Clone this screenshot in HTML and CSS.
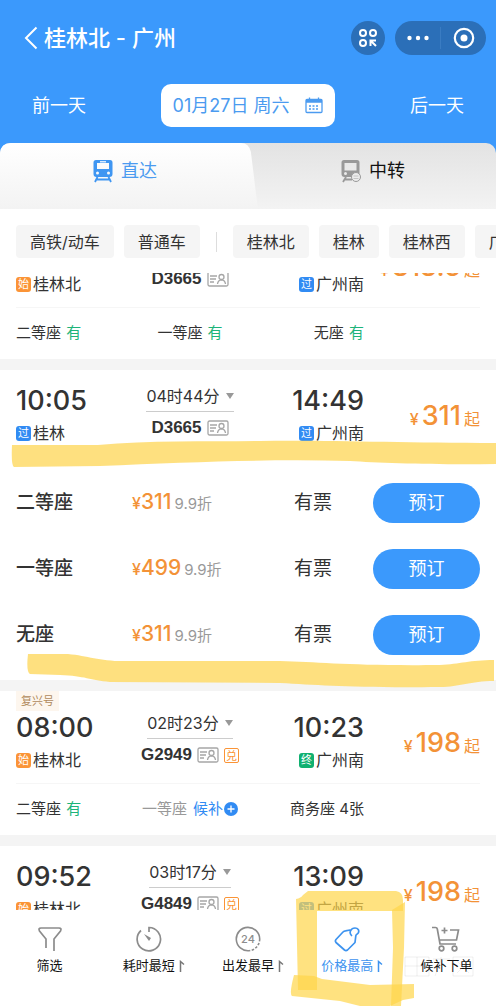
FILE: index.html
```html
<!DOCTYPE html>
<html lang="zh-CN">
<head>
<meta charset="utf-8">
<meta name="viewport" content="width=device-width, initial-scale=1">
<title>桂林北 - 广州</title>
<link rel="stylesheet" href="styles.css">
</head>
<body>
<svg class="defs" width="0" height="0" aria-hidden="true">
  <symbol id="idcard" viewBox="0 0 22 16">
    <g fill="none" stroke="#a6a6a6" stroke-width="1.3">
      <rect x="1" y="1" width="20" height="14" rx="1.5"/>
      <path d="M3 5h7M3 8h6M3 11h4M10.500 13c.3-2.500 1.500-4 4-4.200 2.500.2 3.700 1.700 4 4.200"/>
      <circle cx="14.500" cy="6" r="2.500"/>
    </g>
  </symbol>
  <symbol id="flag" viewBox="0 0 6 12">
    <path d="M1.500 12V1.500L5 4.500" fill="none" stroke="currentColor" stroke-width="1.500"/>
  </symbol>
</svg>
<div class="app">
  <header class="header">
    <div class="nav">
      <button class="back" aria-label="返回"><svg width="14" height="24" viewBox="0 0 14 24"><path d="M12.500 1.500 2 12l10.500 10.500" fill="none" stroke="#fff" stroke-width="2"/></svg></button>
      <h1 class="title">桂林北 - 广州</h1>
      <button class="scan" aria-label="小程序"><svg width="20" height="20" viewBox="0 0 20 20" fill="none" stroke="#fff" stroke-width="2"><circle cx="5" cy="5" r="3"/><circle cx="15" cy="5" r="3"/><circle cx="5" cy="15" r="3"/><path d="M18 12.500h-5.500V18M13 13l5 5"/></svg></button>
      <div class="capsule">
        <button aria-label="更多"><svg width="24" height="22" viewBox="0 0 24 22" fill="#fff"><circle cx="3.500" cy="11" r="2.200"/><circle cx="12" cy="11" r="2.200"/><circle cx="20.500" cy="11" r="2.200"/></svg></button>
        <button aria-label="关闭"><svg width="22" height="22" viewBox="0 0 22 22"><circle cx="11" cy="11" r="9.200" fill="none" stroke="#fff" stroke-width="2.200"/><circle cx="11" cy="11" r="3.500" fill="#fff"/></svg></button>
      </div>
    </div>
    <div class="days">
      <button class="day">前一天</button>
      <button class="date">01月27日 周六
        <svg width="18" height="17" viewBox="0 0 18 17"><g fill="none" stroke="#4b9bf0" stroke-width="1.300"><rect x="1" y="2.500" width="16" height="13" rx="1"/><path d="M1 5h16M4.500.5v3M13.500.5v3"/><path d="M4 9h10M4 12h10" stroke-dasharray="2 1.500"/></g><path d="M1 2.500h16V5H1z" fill="#4b9bf0"/></svg>
      </button>
      <button class="day">后一天</button>
    </div>
  </header>

  <div class="tabs" role="tablist">
    <svg class="tab-shape" viewBox="0 0 258 66" preserveAspectRatio="none" aria-hidden="true">
      <defs><linearGradient id="tabfade" x1="0" y1="0" x2="0" y2="1"><stop offset="0" stop-color="#fff"/><stop offset="1" stop-color="#f3f3f3"/></linearGradient></defs>
      <path d="M0 10Q1 0 11 0H241Q249 0 251 9L258 66H0Z" fill="url(#tabfade)"/>
    </svg>
    <button class="tab active" role="tab" aria-selected="true">
      <svg width="20" height="24" viewBox="0 0 20 24"><path fill="#3f96f2" fill-rule="evenodd" d="M3 1h14a2.500 2.500 0 0 1 2.500 2.500V15a3 3 0 0 1-3 3h-13a3 3 0 0 1-3-3V3.500A2.500 2.500 0 0 1 3 1ZM4 4v6h12V4ZM4.500 12.500a1.500 1.500 0 1 0 0 3 1.500 1.500 0 0 0 0-3ZM15.500 12.500a1.500 1.500 0 1 0 0 3 1.500 1.500 0 0 0 0-3Z"/><path d="M7 2.800h6" stroke="#fff" stroke-width="1.200"/><path d="M4.500 18 2 23M15.500 18l2.500 5M4 20.500h12" stroke="#3f96f2" stroke-width="1.800"/></svg>
      直达
    </button>
    <button class="tab" role="tab" aria-selected="false">
      <svg width="20" height="24" viewBox="0 0 20 24"><path fill="#999" fill-rule="evenodd" d="M3 1h13a2.500 2.500 0 0 1 2.500 2.500V15a3 3 0 0 1-3 3H3.500a3 3 0 0 1-3-3V3.500A2.500 2.500 0 0 1 3 1ZM3.500 4v7.500h12V4ZM4.500 13a1.500 1.500 0 1 0 0 3 1.500 1.500 0 0 0 0-3Z"/><path d="M5 18l-3 5M3 20.500h8" stroke="#999" stroke-width="1.800"/><circle cx="15" cy="18" r="4.500" fill="#ececec" stroke="#999"/><path d="M12.500 17h5M12.500 19.500h5" stroke="#c4c4c4"/></svg>
      中转
    </button>
  </div>

  <nav class="filters">
    <button class="chip">高铁/动车</button>
    <button class="chip">普通车</button>
    <span class="divider"></span>
    <button class="chip">桂林北</button>
    <button class="chip">桂林</button>
    <button class="chip">桂林西</button>
    <button class="chip">广州</button>
  </nav>

  <main class="list">
    <div class="scroll">
      <article class="card">
        <div class="trip">
          <div class="stop"><span class="time">09:22</span><span class="station"><i class="mark start">始</i>桂林北</span></div>
          <div class="mid"><button class="duration">03时53分 <i class="caret"></i></button><span class="train">D3665 <svg width="22" height="16"><use href="#idcard"/></svg></span></div>
          <div class="stop end"><span class="time">13:15</span><span class="station"><i class="mark pass">过</i>广州南</span></div>
          <div class="price"><small>¥</small><b>313.5</b><span>起</span></div>
        </div>
        <div class="seats"><span>二等座 <em>有</em></span><span>一等座 <em>有</em></span><span>无座 <em>有</em></span></div>
      </article>

      <article class="card open">
        <div class="trip">
          <div class="stop"><span class="time">10:05</span><span class="station"><i class="mark pass">过</i>桂林</span></div>
          <div class="mid"><button class="duration">04时44分 <i class="caret"></i></button><span class="train">D3665 <svg width="22" height="16"><use href="#idcard"/></svg></span></div>
          <div class="stop end"><span class="time">14:49</span><span class="station"><i class="mark pass">过</i>广州南</span></div>
          <div class="price"><small>¥</small><b>311</b><span>起</span></div>
        </div>
        <div class="fares">
          <div class="fare"><strong>二等座</strong><span class="cost">¥<b>311</b><small>9.9折</small></span><span class="left">有票</span><button class="book">预订</button></div>
          <div class="fare"><strong>一等座</strong><span class="cost">¥<b>499</b><small>9.9折</small></span><span class="left">有票</span><button class="book">预订</button></div>
          <div class="fare"><strong>无座</strong><span class="cost">¥<b>311</b><small>9.9折</small></span><span class="left">有票</span><button class="book">预订</button></div>
        </div>
        <svg class="stroke" viewBox="0 0 496 320" preserveAspectRatio="none" aria-hidden="true">
          <path d="M12 75 98 75C150 70 210 72 260 71 330 70 400 73 496 73V94C440 95 380 93 350 91 270 89 190 92 100 96L14 97Q11 96 12 75Z"/>
          <path d="M28 284H68C90 286 100 292 130 291H280C320 292 350 296 440 295 460 294 470 290 494 290V311C470 311 460 317 440 317 350 318 320 315 280 313L110 312C90 310 85 306 60 305L30 304Q26 302 28 284Z"/>
        </svg>
      </article>

      <article class="card">
        <span class="tag">复兴号</span>
        <div class="trip tagged">
          <div class="stop"><span class="time">08:00</span><span class="station"><i class="mark start">始</i>桂林北</span></div>
          <div class="mid"><button class="duration">02时23分 <i class="caret"></i></button><span class="train">G2949 <svg width="22" height="16"><use href="#idcard"/></svg><i class="redeem">兑</i></span></div>
          <div class="stop end"><span class="time">10:23</span><span class="station"><i class="mark final">终</i>广州南</span></div>
          <div class="price"><small>¥</small><b>198</b><span>起</span></div>
        </div>
        <div class="seats"><span>二等座 <em>有</em></span><span class="wait">一等座 <a href="#">候补<svg width="14" height="14" viewBox="0 0 14 14"><circle cx="7" cy="7" r="7" fill="#318bf3"/><path d="M7 3.500v7M3.500 7h7" stroke="#fff" stroke-width="1.300"/></svg></a></span><span>商务座 4张</span></div>
      </article>

      <article class="card">
        <div class="trip">
          <div class="stop"><span class="time">09:52</span><span class="station"><i class="mark start">始</i>桂林北</span></div>
          <div class="mid"><button class="duration">03时17分 <i class="caret"></i></button><span class="train">G4849 <svg width="22" height="16"><use href="#idcard"/></svg><i class="redeem">兑</i></span></div>
          <div class="stop end"><span class="time">13:09</span><span class="station"><i class="mark pass">过</i>广州南</span></div>
          <div class="price"><small>¥</small><b>198</b><span>起</span></div>
        </div>
      </article>
    </div>
  </main>

  <footer class="sortbar">
    <button class="sort"><svg width="26" height="26" viewBox="0 0 26 26" fill="none" stroke="#8c8c8c" stroke-width="1.700"><path d="M9 22V13L2.500 5Q1 2 4 2H22Q25 2 23.500 5L17 13V25"/></svg><span>筛选</span></button>
    <button class="sort"><svg width="26" height="26" viewBox="0 0 26 26" fill="none" stroke="#8c8c8c" stroke-width="1.700"><path d="M13 6V1.500A11.700 11.700 0 1 1 5 4.500"/><path d="m8 8 7 4-2 3Z" fill="#8c8c8c" stroke="none"/></svg><span>耗时最短<svg class="dir" width="6" height="12"><use href="#flag"/></svg></span></button>
    <button class="sort"><svg width="26" height="26" viewBox="0 0 26 26" fill="none" stroke="#8c8c8c" stroke-width="1.600"><path d="M14 24.700A11.700 11.700 0 1 1 24.700 13"/><path d="M24.700 13A11.700 11.700 0 0 1 14 24.700" stroke-dasharray="2.500 1.500"/><text x="13" y="17" text-anchor="middle" class="num">24</text></svg><span>出发最早<svg class="dir" width="6" height="12"><use href="#flag"/></svg></span></button>
    <button class="sort on"><svg width="26" height="26" viewBox="0 0 26 26" fill="none" stroke="#3d93ef" stroke-width="1.700" stroke-linejoin="round" stroke-linecap="round"><path d="M17.500 9.500C14.500 6.500 17 2 21 2c3 0 4.500 2.500 3.300 4.800-.7 1.400-2.300 1.500-2.500 3L21 16.500 13.500 24Q12 25.200 10.500 24L2 16.500Q.8 15 2 13.500L9 6Q10 5 11.500 4.800L16 4"/></svg><span>价格最高<svg class="dir" width="6" height="12"><use href="#flag"/></svg></span></button>
    <button class="sort"><svg width="28" height="26" viewBox="0 0 28 26" fill="none" stroke="#8c8c8c" stroke-width="1.700"><path d="M0 1.500H3.500Q5 1.500 5.300 3L8 18H24M18 4H26.500L24.500 14H8M9.500 4.500h6M12.500 1.500v6"/><circle cx="9.500" cy="22.500" r="2.300"/><circle cx="22.500" cy="22.500" r="2.300"/></svg><span>候补下单</span></button>
    <svg class="frame" viewBox="0 0 128 118" aria-hidden="true">
      <path d="M18 3H106Q113 4 113 12V23H27V102H8L6 11Q11 10 13 7Z"/>
      <path d="M4 87 24 88 32 91 80 97 124 96V110L113 112 100 118H70L50 113 2 108Q-1 106 4 87Z"/>
      <path d="M102 22 115 14 114 60 111 118H101L103 60Z"/>
    </svg>
    <svg class="watermark" viewBox="0 0 72 22" aria-hidden="true"><path d="M1 1h24v19H1zM1 10h24M13 1v19M29 3h17M37 1v3L31 20M49 1h20v19H49zM53 5l12 12M65 5 53 17"/></svg>
  </footer>
</div>
</body>
</html>
```
FILE: styles.css
```css
* { box-sizing: border-box; }
body {
  margin: 0;
  font-family: Inter, "Noto Sans CJK SC", sans-serif;
  font-size: 16px;
  line-height: 24px;
  color: #333;
  background: #fff;
}
button {
  margin: 0;
  padding: 0;
  border: 0;
  background: none;
  color: inherit;
  font: inherit;
  white-space: nowrap;
}
i, em { font-style: normal; }
svg { display: block; flex: none; }
.defs { position: absolute; }
.app {
  display: flex;
  flex-direction: column;
  height: 100vh;
  overflow: hidden;
}

/* header */
.header { padding-bottom: 26px; margin-bottom: -10px; background: #3b99fc; color: #fff; flex: none; }
.nav { display: flex; align-items: center; height: 76px; padding: 0 10px 0 24px; }
.title { flex: 1; margin: 0 0 0 6px; font-size: 22px; line-height: 32px; font-weight: 500; }
.scan {
  display: grid;
  place-items: center;
  width: 34px;
  height: 34px;
  margin-right: 10px;
  border-radius: 50%;
  background: #2b6fb8;
}
.capsule { display: flex; align-items: center; width: 91px; height: 34px; border-radius: 17px; background: #2b6fb8; }
.capsule button { flex: 1; display: grid; place-items: center; height: 22px; }
.capsule button + button { border-left: 1px solid #3a7cc2; }
.days { display: flex; align-items: center; justify-content: space-between; margin-top: 8px; padding: 0 32px; font-size: 18px; }
.date {
  display: flex;
  align-items: center;
  gap: 16px;
  height: 43px;
  padding: 0 12px;
  border-radius: 10px;
  background: #fff;
  color: #4b9bf0;
}

/* tabs */
.tabs {
  position: relative;
  display: flex;
  flex: none;
  height: 66px;
  border-radius: 10px 10px 0 0;
  background: linear-gradient(#e3e3e3, #f3f3f3);
}
.tab-shape { position: absolute; left: 0; top: 0; width: 52%; height: 100%; }
.tab {
  position: relative;
  flex: 1;
  display: flex;
  align-items: center;
  justify-content: center;
  gap: 8px;
  padding: 0 0 10px 2px;
  font-size: 18px;
  color: #111;
}
.tab.active { color: #4b9bf0; }

/* filters */
.filters { display: flex; flex: none; gap: 10px; padding: 16px 0 15px 16px; overflow: hidden; }
.chip { flex: none; height: 33px; padding: 0 14px; border-radius: 4px; background: #f5f5f5; }
.divider { flex: none; width: 1px; height: 20px; margin: 7px 6px 0; background: #ddd; }

/* train list */
.list { flex: 1; min-height: 0; overflow: hidden; background: #f4f4f4; }
.scroll { display: flex; flex-direction: column; gap: 11px; margin-top: -52px; }
.card { position: relative; padding: 0 16px; background: #fff; }
.trip { display: grid; grid-template-columns: repeat(4, 1fr); height: 86px; padding-top: 15px; }
.trip.tagged { height: 92px; padding-top: 21px; }
.stop { display: flex; flex-direction: column; white-space: nowrap; }
.end { align-items: flex-end; }
.time { font-size: 27px; line-height: 32px; font-weight: 500; }
.station { display: flex; align-items: center; gap: 2px; margin-top: 4px; }
.mark { width: 15px; height: 15px; border-radius: 3px; color: #fff; font-size: 11px; line-height: 15px; text-align: center; }
.start { background: #fb9436; }
.pass { background: #318bf3; }
.final { background: #10b070; }
.mid { display: flex; flex-direction: column; align-items: center; white-space: nowrap; }
.duration { display: flex; align-items: center; gap: 6px; height: 27px; padding-bottom: 4px; border-bottom: 1px solid #ccc; }
.caret { border: 4px solid transparent; border-top: 6px solid #999; border-bottom: 0; }
.train { display: flex; align-items: center; gap: 5px; margin-top: 4px; font: bold 17px/24px "Liberation Sans", sans-serif; }
.redeem { width: 15px; height: 15px; border: 1px solid #fb9436; border-radius: 2px; color: #fb9436; font: 11px/13px "Noto Sans CJK SC", sans-serif; text-align: center; }
.price { display: flex; align-items: baseline; justify-content: flex-end; padding-top: 13px; color: #f39237; line-height: 36px; }
.price small { font-size: 16px; font-weight: 500; margin-right: 3px; }
.price b { font-size: 27px; font-weight: 500; }
.price span { margin-left: 3px; }
.seats { display: grid; grid-template-columns: repeat(4, 1fr); height: 52px; padding-bottom: 2px; align-items: center; border-top: 1px solid #f6f6f6; font-size: 15px; white-space: nowrap; }
.seats span:nth-child(2) { justify-self: center; }
.seats span:nth-child(3) { justify-self: end; }
.seats em { margin-left: 1px; color: #1db47a; }
.seats .wait { display: flex; gap: 6px; color: #999; }
.wait a { display: flex; align-items: center; gap: 1px; color: #318bf3; text-decoration: none; }
.tag { position: absolute; left: 16px; top: 0; padding: 0 5px; background: #fdf6ee; color: #b08a5c; font-size: 11px; line-height: 20px; }

/* fare rows */
.fares { padding: 14px 0 12px; }
.fare { display: grid; grid-template-columns: repeat(4, 1fr); align-items: center; height: 66px; font-size: 19px; white-space: nowrap; }
.fare strong { font-weight: 500; }
.cost { display: flex; align-items: baseline; color: #f39237; font-size: 16px; font-weight: 500; }
.cost b { font-size: 21px; font-weight: 500; }
.cost small { margin-left: 3px; color: #999; font-size: 15px; font-weight: 400; }
.left { justify-self: end; padding-right: 32px; }
.book { justify-self: end; width: 107px; height: 40px; border-radius: 20px; background: #3b99fc; color: #fff; font-size: 18px; }

/* highlighter */
.stroke, .frame { position: absolute; pointer-events: none; }
.stroke { z-index: 1; left: 0; top: 0; width: 100%; height: 320px; fill: #fedb68; fill-opacity: .85; }
.frame { right: 78px; top: -22px; width: 128px; height: 118px; fill: #ffd54a; fill-opacity: .7; }

/* bottom bar */
.sortbar { position: relative; display: flex; flex: none; height: 96px; padding-top: 16px; background: #fff; }
.sort { flex: 1; display: flex; flex-direction: column; align-items: center; justify-content: flex-start; gap: 1px; color: #111; font-size: 13px; }
.sort span { position: relative; }
.on { color: #3d93ef; }
.num { fill: #8c8c8c; stroke: none; font-size: 11px; font-weight: 500; }
.dir { position: absolute; left: 100%; top: 7px; margin-left: 4px; color: #777; }
.on .dir { color: #3d93ef; }
.watermark { position: absolute; right: 20px; top: 46px; width: 72px; height: 22px; fill: none; stroke: #999; stroke-opacity: .15; }
```
